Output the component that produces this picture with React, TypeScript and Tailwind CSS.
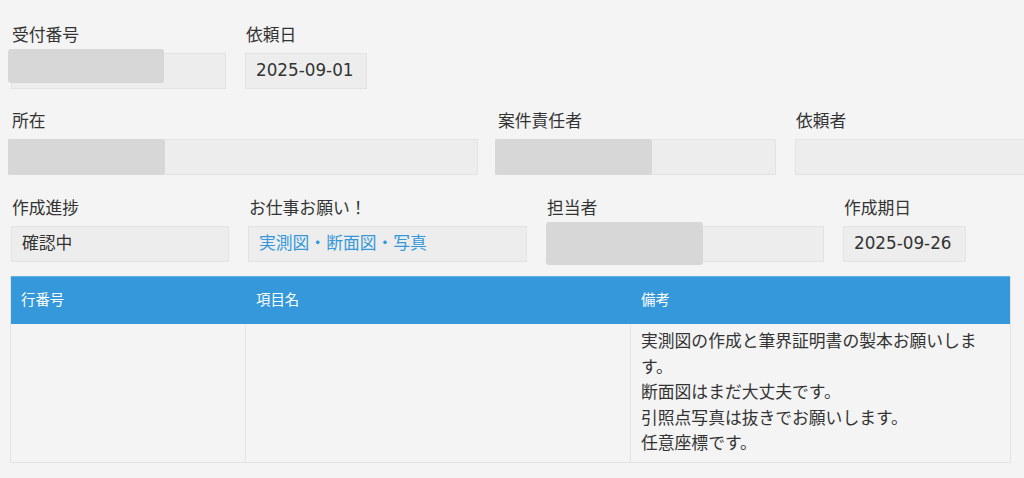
const FONT = { fontFamily: '"DejaVu Sans", "Noto Sans CJK JP", sans-serif' };

type Redact = { left: number; top: number; width: number; height: number };

const Field: React.FC<{
  label: string;
  width: number;
  value?: string;
  blue?: boolean;
  labelPad?: number;
  redact?: Redact;
}> = ({ label, width, value, blue, labelPad = 1, redact }) => (
  <div className="shrink-0" style={{ width }}>
    <div className="h-[26px] leading-[26px] text-[16.8px] text-[#333] whitespace-nowrap" style={{ paddingLeft: labelPad }}>
      {label}
    </div>
    <div className="relative mt-[5px] h-[36px] bg-[#ededed] border border-[#e3e3e3] px-[10px] flex items-center text-[16.8px] whitespace-nowrap">
      <span className={blue ? "text-[#3498db]" : "text-[#333]"}>{value}</span>
      {redact && (
        <div
          className="absolute bg-[#d7d7d7] rounded-[3px]"
          style={{ left: redact.left, top: redact.top, width: redact.width, height: redact.height }}
        />
      )}
    </div>
  </div>
);

export default function App() {
  return (
    <div className="w-[1024px] h-[478px] overflow-hidden bg-[#f4f4f4] pt-[22px]" style={FONT}>
      {/* row 1 */}
      <div className="flex ml-[11px] gap-[19px]">
        <Field label="受付番号" width={215} redact={{ left: -4, top: -5, width: 156, height: 34 }} />
        <Field label="依頼日" width={122} value="2025-09-01" />
      </div>

      {/* row 2 */}
      <div className="flex ml-[8px] mt-[19px]">
        <Field label="所在" width={470} labelPad={4} redact={{ left: -1, top: -1, width: 157, height: 36 }} />
        <div className="w-[17px] shrink-0" />
        <Field label="案件責任者" width={281} labelPad={3} redact={{ left: -1, top: -1, width: 157, height: 36 }} />
        <div className="w-[19px] shrink-0" />
        <Field label="依頼者" width={260} />
      </div>

      {/* row 3 */}
      <div className="flex ml-[11px] mt-[20px] gap-[19px]">
        <Field label="作成進捗" width={218} value="確認中" />
        <Field label="お仕事お願い！" width={279} value="実測図・断面図・写真" blue />
        <Field label="担当者" width={278} redact={{ left: -1, top: -5, width: 157, height: 43 }} />
        <Field label="作成期日" width={123} value="2025-09-26" />
      </div>

      {/* table */}
      <div className="ml-[10px] mt-[14px] w-[1001px] border-x border-b border-[#e3e3e3]">
        <div className="flex h-[48px] bg-[#3498db] border-t border-[#62b0e6] text-white text-[14.4px] items-center">
          <div className="w-[235px] pl-[10px]">行番号</div>
          <div className="w-[385px] pl-[10px]">項目名</div>
          <div className="flex-1 pl-[10px]">備考</div>
        </div>
        <div className="flex text-[#333] text-[16.8px] leading-[25.5px]">
          <div className="w-[235px] border-r border-[#e3e3e3]" />
          <div className="w-[385px] border-r border-[#e3e3e3]" />
          <div className="flex-1 pl-[10px] pr-[20px] pt-[5px] pb-[5px]">
            <div>実測図の作成と筆界証明書の製本お願いします。</div>
            <div>断面図はまだ大丈夫です。</div>
            <div>引照点写真は抜きでお願いします。</div>
            <div>任意座標です。</div>
          </div>
        </div>
      </div>
    </div>
  );
}
